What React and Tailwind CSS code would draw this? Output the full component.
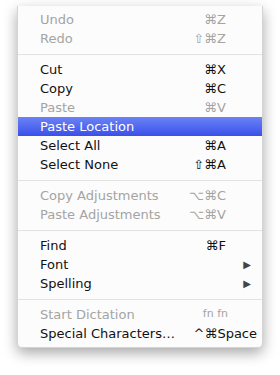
import React from 'react';

const groups = [
  [
    { label: 'Undo', keys: '⌘Z', disabled: true },
    { label: 'Redo', keys: '⇧⌘Z', disabled: true },
  ],
  [
    { label: 'Cut', keys: '⌘X' },
    { label: 'Copy', keys: '⌘C' },
    { label: 'Paste', keys: '⌘V', disabled: true },
    { label: 'Paste Location', active: true },
    { label: 'Select All', keys: '⌘A' },
    { label: 'Select None', keys: '⇧⌘A' },
  ],
  [
    { label: 'Copy Adjustments', keys: '⌥⌘C', disabled: true },
    { label: 'Paste Adjustments', keys: '⌥⌘V', disabled: true },
  ],
  [
    { label: 'Find', keys: '⌘F' },
    { label: 'Font', submenu: true },
    { label: 'Spelling', submenu: true },
  ],
  [
    { label: 'Start Dictation', keys: 'fn fn', disabled: true, small: true },
    { label: 'Special Characters…', keys: '^⌘Space', wide: true },
  ],
];

function MenuItem({ item }) {
  const row = item.active
    ? 'bg-gradient-to-b from-[#6d82f5] to-[#3a4fe9] text-white'
    : item.disabled
      ? 'text-[#a4a4a4]'
      : 'text-[#111]';

  let right = null;
  if (item.submenu) {
    right = <span className="pr-[11px] text-[10px] text-[#444]">▶</span>;
  } else if (item.keys) {
    const pad = item.wide ? 'pr-[5px]' : item.small ? 'pr-[34px] text-[11px]' : 'pr-[36px]';
    right = <span className={pad}>{item.keys}</span>;
  }

  return (
    <div className={`flex h-[19px] items-center justify-between pl-[22px] ${row}`}>
      <span>{item.label}</span>
      {right}
    </div>
  );
}

export default function App() {
  return (
    <div className="h-[375px] w-[280px] bg-white pt-[6px] pl-[17px] font-['DejaVu_Sans',sans-serif] text-[13px]">
      <div className="w-[246px] rounded-b-[5px] border border-t-0 border-[#d4d4d4] bg-[#fcfcfc] py-[4px] shadow-[0_5px_14px_rgba(0,0,0,0.35)]">
        {groups.map((group, gi) => (
          <div key={gi}>
            {gi > 0 && (
              <div className="flex h-[12px] items-center">
                <div className="h-px w-full bg-[#e2e2e2]" />
              </div>
            )}
            {group.map((item) => (
              <MenuItem key={item.label} item={item} />
            ))}
          </div>
        ))}
      </div>
    </div>
  );
}
